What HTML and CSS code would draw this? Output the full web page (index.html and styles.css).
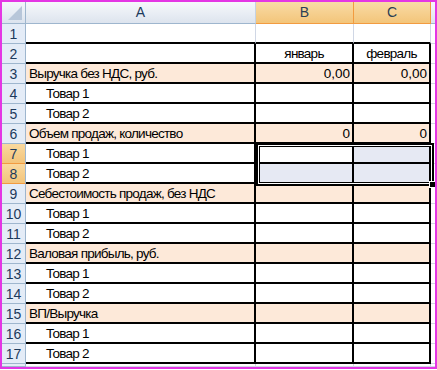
FILE: index.html
```html
<!DOCTYPE html>
<html>
<head>
<meta charset="utf-8">
<link rel="stylesheet" href="styles.css">
</head>
<body>
<div class="frame">
  <div class="sheet">
    <div class="corner"><svg width="16" height="16" viewBox="0 0 16 16"><polygon points="15,1 15,15 1,15" fill="#b7c6d9"/></svg></div>
    <div class="ch">A</div>
    <div class="ch on">B</div>
    <div class="ch on">C</div>
    <div class="ch end"></div>

    <div class="rh">1</div><div class="cell r1"></div><div class="cell r1"></div><div class="cell r1"></div><div class="cell"></div>

    <div class="rh">2</div><div class="cell t"></div><div class="cell t ctr">январь</div><div class="cell t ctr">февраль</div><div class="cell"></div>

    <div class="rh">3</div><div class="cell t pe lab">Выручка без НДС, руб.</div><div class="cell t pe num">0,00</div><div class="cell t pe num">0,00</div><div class="cell"></div>
    <div class="rh">4</div><div class="cell t ind">Товар 1</div><div class="cell t"></div><div class="cell t"></div><div class="cell"></div>
    <div class="rh">5</div><div class="cell t ind">Товар 2</div><div class="cell t"></div><div class="cell t"></div><div class="cell"></div>

    <div class="rh">6</div><div class="cell t pe lab">Объем продаж, количество</div><div class="cell t pe num">0</div><div class="cell t pe num">0</div><div class="cell"></div>
    <div class="rh on">7</div><div class="cell t ind">Товар 1</div><div class="cell t"></div><div class="cell t sel"></div><div class="cell"></div>
    <div class="rh on">8</div><div class="cell t ind">Товар 2</div><div class="cell t sel"></div><div class="cell t sel"></div><div class="cell"></div>

    <div class="rh">9</div><div class="cell t pe lab">Себестоимость продаж, без НДС</div><div class="cell t pe"></div><div class="cell t pe"></div><div class="cell"></div>
    <div class="rh">10</div><div class="cell t ind">Товар 1</div><div class="cell t"></div><div class="cell t"></div><div class="cell"></div>
    <div class="rh">11</div><div class="cell t ind">Товар 2</div><div class="cell t"></div><div class="cell t"></div><div class="cell"></div>

    <div class="rh">12</div><div class="cell t pe lab">Валовая прибыль, руб.</div><div class="cell t pe"></div><div class="cell t pe"></div><div class="cell"></div>
    <div class="rh">13</div><div class="cell t ind">Товар 1</div><div class="cell t"></div><div class="cell t"></div><div class="cell"></div>
    <div class="rh">14</div><div class="cell t ind">Товар 2</div><div class="cell t"></div><div class="cell t"></div><div class="cell"></div>

    <div class="rh">15</div><div class="cell t pe lab">ВП/Выручка</div><div class="cell t pe"></div><div class="cell t pe"></div><div class="cell"></div>
    <div class="rh">16</div><div class="cell t ind">Товар 1</div><div class="cell t"></div><div class="cell t"></div><div class="cell"></div>
    <div class="rh">17</div><div class="cell t ind">Товар 2</div><div class="cell t"></div><div class="cell t"></div><div class="cell"></div>

    <div class="rh"></div><div class="cell"></div><div class="cell"></div><div class="cell"></div><div class="cell"></div>

    <div class="selection"><span class="handle"></span></div>
  </div>
</div>
</body>
</html>
```

FILE: styles.css
```css
html, body {
  margin: 0;
  padding: 0;
  background: #ffffff;
}

.frame {
  width: 433px;
  height: 365px;
  border: 2px solid #e436e4;
  overflow: hidden;
}

.sheet {
  position: relative;
  display: grid;
  grid-template-columns: 24px 230px 98px 77px 4px;
  grid-template-rows: 22px repeat(17, 20px) 3px;
  font-family: "Liberation Sans", Arial, sans-serif;
  font-size: 13.5px;
  color: #000;
}

.sheet > div {
  box-sizing: border-box;
  overflow: hidden;
  white-space: nowrap;
}

.corner {
  background: linear-gradient(#f4f7fb, #dbe3ee);
  border-right: 1px solid #9eb6ce;
  border-bottom: 1px solid #9eb6ce;
  display: flex;
  align-items: flex-end;
  justify-content: flex-end;
  padding: 0 2px 2px 0;
}

.corner svg {
  display: block;
}

.ch {
  background: linear-gradient(#f6f8fb, #dde4ee);
  border-right: 1px solid #c5d2e2;
  border-bottom: 1px solid #9eb6ce;
  text-align: center;
  line-height: 21px;
  color: #1c3a5c;
  font-size: 14px;
}

.ch.on {
  background: linear-gradient(#f9dba6, #f3c57a);
  border-right: 1px solid #f29b40;
  border-bottom: 1px solid #f29b40;
  color: #2a3f55;
}

.ch.end {
  border-right: none;
}

.rh {
  background: #e4ecf7;
  border-right: 1px solid #9eb6ce;
  border-bottom: 1px solid #9eb6ce;
  text-align: center;
  line-height: 20px;
  color: #1c3a5c;
  font-size: 14px;
}

.rh.on {
  background: linear-gradient(#f9d99f, #f3c47a);
  border-bottom-color: #f29b40;
}

.cell {
  border-right: 1px solid #d0d7e5;
  border-bottom: 1px solid #d0d7e5;
  line-height: 20px;
  padding: 0 3px;
  letter-spacing: -0.75px;
}

.cell.r1 {
  border-bottom: 2px solid #000;
}

.cell.t {
  border-right: 2px solid #000;
  border-bottom: 2px solid #000;
}

.pe {
  background: #fde9d9;
}

.sel {
  background: #e6e9f3;
}

.lab {
  padding-left: 3px;
}

.ind {
  padding-left: 20px;
}

.num {
  text-align: right;
  padding-right: 2px;
  letter-spacing: 0;
}

.ctr {
  text-align: center;
}

.selection {
  position: absolute;
  left: 254px;
  top: 141px;
  width: 178px;
  height: 43px;
  box-sizing: border-box;
  border: 2px solid #000;
  box-shadow: inset 0 0 0 1px #fff, inset 0 0 0 2px #000;
  overflow: visible !important;
  pointer-events: none;
}

.handle {
  position: absolute;
  right: -4px;
  bottom: -4px;
  width: 5px;
  height: 5px;
  background: #000;
  border: 1px solid #fff;
}
```
